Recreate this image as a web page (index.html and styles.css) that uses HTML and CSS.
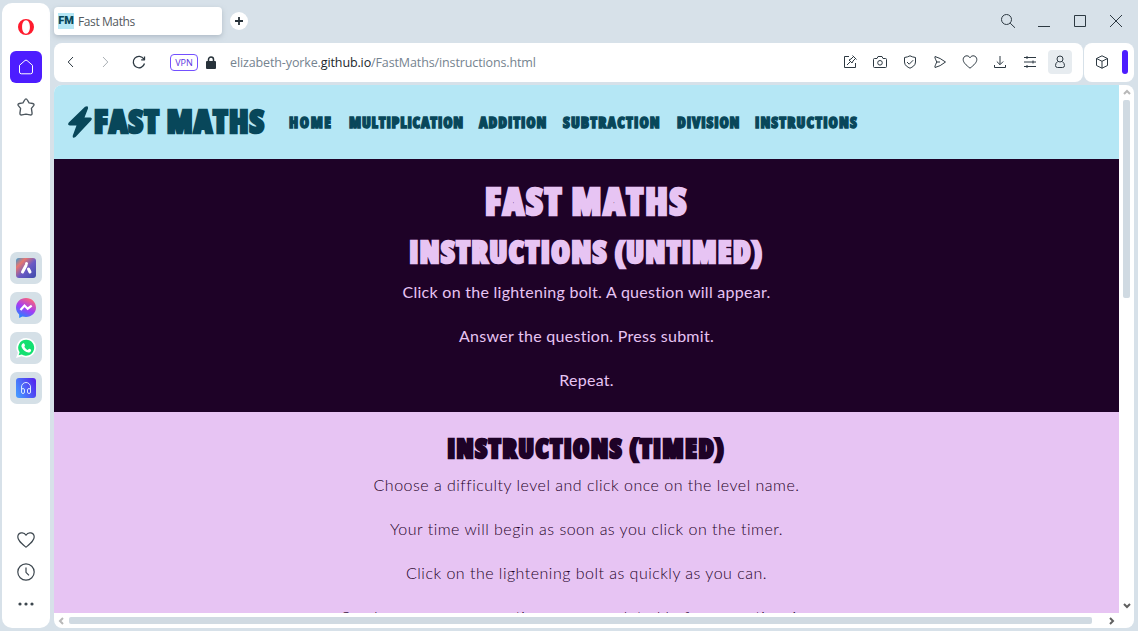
FILE: index.html
```html
<!DOCTYPE html>
<html lang="en">
<head>
<meta charset="utf-8">
<title>Fast Maths</title>
<link rel="stylesheet" href="styles.css">
</head>
<body>
<div class="window">
  <aside class="sidebar">
    <div class="side-group side-top">
      <svg class="opera" viewBox="0 0 16 16"><path fill="#ff1b2d" fill-rule="evenodd" d="M8 0a8 8 0 1 0 0 16A8 8 0 1 0 8 0M8 1.300c2.300 0 3.900 2.800 3.900 6.700S10.300 14.700 8 14.700 4.100 11.900 4.100 8 5.700 1.300 8 1.300"/></svg>
      <span class="home-button"><svg class="icon" viewBox="0 0 16 16"><path stroke="#fff" d="M1.500 6.300 7 1.500q1-.8 2 0l5.500 4.800V13q0 1.800-1.800 1.800H3.300Q1.500 14.800 1.500 13z"/></svg></span>
      <svg class="icon star" viewBox="0 0 16 16"><path d="M8 .8Q8.700.8 9.200 1.800l1.500 2.600 3.200.5q1.900.5.9 1.900l-2 2.400.6 4.300q0 1.900-1.800 1.500L8 14.300 4.400 15q-1.800.4-1.800-1.500l.6-4.300-2-2.400Q.2 5.400 2.100 4.900l3.200-.5 1.500-2.600Q7.300.8 8 .8z"/></svg>
    </div>
    <div class="side-group side-apps">
      <span class="app"><svg viewBox="0 0 20 20"><defs><linearGradient id="aria" x2="1" y2="1"><stop stop-color="#339bd0"/><stop offset=".25" stop-color="#e77770"/><stop offset=".55" stop-color="#6959c5"/><stop offset="1" stop-color="#3e4baa"/></linearGradient></defs><rect width="20" height="20" rx="3" fill="url(#aria)"/><path d="M10 7.500 6.500 14M12.500 11l1.500 3" fill="none" stroke="#fff" stroke-width="3" stroke-linecap="round"/><circle cx="10.500" cy="5.500" r="1.500" fill="#fff"/></svg></span>
      <span class="app"><svg viewBox="0 0 20 20"><defs><linearGradient id="msg" x1=".2" y1="1" x2=".7" y2="0"><stop stop-color="#178cff"/><stop offset=".5" stop-color="#a23cf5"/><stop offset="1" stop-color="#ff6575"/></linearGradient></defs><path fill="url(#msg)" d="M10 0C4.300 0 0 4.200 0 9.600c0 3 1.200 5.300 3.200 7V20l3.200-1.500c1.100.3 2.300.5 3.600.5 5.700 0 10-4 10-9.400S15.700 0 10 0"/><path d="m4.500 12 4-4.500 3.200 3.200 4-3" fill="none" stroke="#fff" stroke-width="2.200"/></svg></span>
      <span class="app"><svg viewBox="0 0 20 20"><path fill="#fff" d="M10.300 0a9.700 9.700 0 0 1 0 19.400c-1.700 0-3.300-.5-4.700-1.200L0 20l1.900-5.200A9.700 9.700 0 0 1 10.300 0"/><path fill="#14e071" d="M10.300 1.700a8 8 0 1 1-4.500 14.700l-3.200.9 1-3.100A8 8 0 0 1 10.300 1.700"/><path fill="#fff" d="M6.900 5.500c1-.5 1.500.1 2 1.600.3.900-.7 1.300-.4 1.900.8 1.400 1.800 2.300 3.100 2.900.7.200 1-1.300 1.700-1.100 1.700.7 2 .9 1.800 1.600-.5 2.100-2.500 2.500-4.600 1.600C7.900 12.900 6.200 11 5.500 8.800c-.3-1.400.2-2.600 1.400-3.300"/></svg></span>
      <span class="app"><svg viewBox="0 0 20 20"><defs><linearGradient id="player" x1="0" y1=".7" x2="1" y2=".2"><stop stop-color="#4696ff"/><stop offset="1" stop-color="#5424ee"/></linearGradient></defs><rect width="20" height="20" rx="3" fill="url(#player)"/><g fill="none" stroke="#d9e8ff"><path d="M5.500 13V9a4.500 4.500 0 0 1 9 0v4"/><rect x="5.500" y="10.500" width="3" height="5" rx="1.500"/><rect x="11.500" y="10.500" width="3" height="5" rx="1.500"/></g></svg></span>
    </div>
    <div class="side-group side-bottom">
      <svg class="icon heart" viewBox="0 0 18 16"><path d="M9 15.200C4 11 .8 8.500.8 5 .8.500 6.800-.8 9 3.200 11.200-.8 17.200.5 17.200 5c0 3.500-3.200 6-8.200 10.200z"/></svg>
      <svg class="icon heart" viewBox="0 0 18 18"><circle cx="9" cy="9" r="8.200"/><path d="M9 4.500v4.800l3 3"/></svg>
      <svg class="dots" viewBox="0 0 16 4"><circle cx="2" cy="2" r="1.600"/><circle cx="8" cy="2" r="1.600"/><circle cx="14" cy="2" r="1.600"/></svg>
    </div>
  </aside>

  <div class="main">
    <header class="tabs">
      <div class="tab"><span class="favicon">FM</span>Fast Maths</div>
      <span class="new-tab"><svg viewBox="0 0 10 10"><path d="M5 1v8M1 5h8"/></svg></span>
      <div class="controls">
        <svg class="icon" viewBox="0 0 16 16"><circle cx="6.500" cy="6.500" r="5"/><path d="m10.200 10.200 4.800 4.600"/></svg>
        <svg class="icon" viewBox="0 0 16 16"><path d="M2 13.500h12"/></svg>
        <svg class="icon" viewBox="0 0 16 16"><path d="M2.500 2.500h11v11h-11z"/></svg>
        <svg class="icon" viewBox="0 0 16 16"><path d="m2 2 12 12M14 2 2 14"/></svg>
      </div>
    </header>

    <div class="toolbar-row">
      <div class="toolbar">
        <div class="history">
          <svg class="icon" viewBox="0 0 16 16"><path d="M10 3 5.200 8l4.800 5"/></svg>
          <svg class="icon disabled" viewBox="0 0 16 16"><path d="m6 3 4.800 5L6 13"/></svg>
          <svg class="icon" viewBox="0 0 16 16"><path stroke-width="1.300" d="M13.500 9.500A5.700 5.700 0 1 1 12.800 5M13.500 2.500v3.300h-3.300"/></svg>
        </div>
        <span class="vpn">VPN</span>
        <svg class="lock" viewBox="0 0 10 13"><path fill="none" stroke="#27323a" stroke-width="1.500" d="M2.500 6V3.500a2.500 2.500 0 0 1 5 0V6"/><rect y="5" width="10" height="8" rx="1" fill="#27323a"/></svg>
        <div class="url">elizabeth-yorke.<b>github.io</b>/FastMaths/instructions.html</div>
        <div class="actions">
          <svg class="icon" viewBox="0 0 16 16"><path d="M7 2.500H2.500v11h11V9M5 11l3-3M7 6l3 3 1-2 2.500-2.500-2-2L9 5zM10.500 1.500l4 4"/></svg>
          <svg class="icon" viewBox="0 0 16 16"><path d="M2.500 4.500H5l1-2h4l1 2h2.500q1 0 1 1v7q0 1-1 1h-11q-1 0-1-1v-7q0-1 1-1z"/><circle cx="8" cy="8.800" r="2.300"/></svg>
          <svg class="icon" viewBox="0 0 16 16"><path d="M8 1.800Q10 3 13.500 3.500V8c0 3.500-3 5-5.500 6.200C5.500 13 2.500 11.500 2.500 8V3.500Q6 3 8 1.800zM5 8l2.200 2.200 4-4"/></svg>
          <svg class="icon" viewBox="0 0 16 16"><path d="M3 2.500q5 1.300 10.500 5.500Q8 12.500 3 13.500 2.300 13 4.800 8 2.300 3 3 2.500zM5 8h3"/></svg>
          <svg class="icon" viewBox="0 0 16 16"><path d="M8 14.200C4 11 1.200 8.500 1.200 5.500 1.200 1.600 6.200.4 8 3.800c1.800-3.400 6.800-2.200 6.800 1.700 0 3-2.800 5.500-6.800 8.700z"/></svg>
          <svg class="icon" viewBox="0 0 16 16"><path d="M8 2v8.500M4.800 7.500 8 10.700l3.200-3.200M2.500 11v2.500h11V11"/></svg>
          <svg class="icon" viewBox="0 0 16 16"><path d="M2 3.500h12M2 8h12M2 12.500h12M5 2v3M11 6.500v3M5 11v3"/></svg>
          <span class="profile"><svg class="icon" viewBox="0 0 16 16"><circle cx="8" cy="5" r="3"/><path d="M5.800 7.500Q3.500 9 3.500 11.500q0 2 2 2h5q2 0 2-2 0-2.500-2.300-4"/></svg></span>
        </div>
      </div>
      <div class="panel-box">
        <svg class="icon" viewBox="0 0 16 16"><path d="m8 1.800 5.500 2.700v7L8 14.200l-5.500-2.700v-7zM2.500 4.500 8 7.300l5.500-2.800M8 7.300v7"/></svg>
        <span class="handle"></span>
      </div>
    </div>

    <div class="viewport">
      <main class="page">
        <nav class="navbar">
          <a class="brand"><svg class="bolt" viewBox="0 0 24 32"><path d="M17 .8Q20.500-.8 20 2.500l-3.500 9h5.800q2.700.5.700 3L7.500 31q-3.300 2-2.700-1.500l3.700-10H1.800q-2.800-.5-1-3z"/></svg><span class="display brand-name">FAST MATHS</span></a>
          <div class="links display small-caps">
            <a class="l1">Home</a><a class="l2">Multiplication</a><a class="l3">Addition</a><a class="l4">Subtraction</a><a class="l5">Division</a><a class="l6">Instructions</a>
          </div>
        </nav>
        <section class="untimed">
          <h1 class="display">FAST MATHS</h1>
          <h2 class="display small-caps">Instructions (Untimed)</h2>
          <p>Click on the lightening bolt. A question will appear.</p>
          <p>Answer the question. Press submit.</p>
          <p>Repeat.</p>
        </section>
        <section class="timed">
          <h3 class="display small-caps">Instructions (Timed)</h3>
          <p>Choose a difficulty level and click once on the level name.</p>
          <p>Your time will begin as soon as you click on the timer.</p>
          <p>Click on the lightening bolt as quickly as you can.</p>
          <p>Send your answer, questions are completed before your time is up.</p>
        </section>
      </main>
      <div class="vscroll">
        <svg class="arrow" viewBox="0 0 8 6"><path d="m1 5 3-3 3 3"/></svg>
        <span class="vthumb"></span>
        <svg class="arrow dark" viewBox="0 0 8 6"><path d="m1 1 3 3 3-3"/></svg>
      </div>
      <div class="hscroll">
        <svg class="arrow-h" viewBox="0 0 6 8"><path d="M5 1 2 4l3 3"/></svg>
        <span class="hthumb"></span>
        <svg class="arrow-h dark" viewBox="0 0 6 8"><path d="m1 1 3 3-3 3"/></svg>
      </div>
    </div>
  </div>
</div>
</body>
</html>
```
FILE: styles.css
```css
* { box-sizing: border-box; }
body { margin: 0; font-family: "Open Sans", sans-serif; }
svg { display: block; flex: none; }
.window { width: 1138px; height: 631px; padding: 3px 4px 3px 2px; display: flex; gap: 4px; background: #d7e1e9; overflow: hidden; }
.icon { width: 16px; height: 16px; fill: none; stroke: #2d3942; stroke-width: 1; stroke-linejoin: round; }

/* Sidebar */
.sidebar { width: 48px; height: 625px; background: #fff; border-radius: 10px; display: flex; flex-direction: column; }
.side-group { display: flex; flex-direction: column; align-items: center; }
.side-top { padding-top: 16px; gap: 16px; }
.opera { width: 16px; height: 16px; }
.star { width: 18px; height: 18px; margin-top: -1px; stroke: #4c565e; stroke-width: 1.2; }
.home-button { width: 32px; height: 32px; border-radius: 6px; background: #4d1dff; display: grid; place-items: center; }
.side-apps { margin-top: 136px; gap: 8px; }
.app { width: 32px; height: 32px; border-radius: 7px; background: #d5e0e7; display: grid; place-items: center; }
.app svg { width: 20px; height: 20px; }
.side-bottom { margin-top: auto; padding: 0 1px 22px 0; gap: 14px; }
.heart { width: 18px; height: 18px; stroke: #3d474f; stroke-width: 1.2; }
.dots { width: 16px; height: 4px; fill: #3d474f; margin-top: 7px; }

/* Tab strip and toolbar */
.main { width: 1080px; display: flex; flex-direction: column; }
.tabs { height: 40px; padding-top: 4px; display: flex; align-items: flex-start; }
.tab { width: 168px; height: 28px; padding-left: 4px; display: flex; align-items: center; gap: 4px; background: #fff; border-radius: 4px; box-shadow: 0 2px 5px #8e9ba888; font-size: 12px; letter-spacing: -.4px; color: #545a60; }
.favicon { width: 16px; height: 16px; background: #b5e7f5; color: #08475a; font: 900 11px/16px Roboto, sans-serif; letter-spacing: 0; text-align: center; }
.new-tab { width: 18px; height: 18px; margin: 5px 0 0 8px; border-radius: 50%; background: #fff; display: grid; place-items: center; }
.new-tab svg { width: 10px; height: 10px; stroke: #27323a; stroke-width: 1.8; }
.controls { margin: 6px 10px 0 auto; display: flex; gap: 20px; }
.toolbar-row { display: flex; gap: 1px; height: 39px; }
.toolbar { width: 1029px; background: #fff; border-radius: 8px; display: flex; align-items: center; padding: 0 11px 1px 9px; }
.history { display: flex; gap: 18px; }
.disabled { stroke: #aab0b5; }
.vpn { width: 28px; height: 17px; margin-left: 23px; border: 1px solid #7350ff; border-radius: 4px; color: #5a35df; font-size: 9px; font-weight: 500; line-height: 15px; text-align: center; }
.lock { width: 10px; height: 13px; margin-left: 8px; }
.url { margin-left: 14px; font-size: 12.500px; letter-spacing: -.12px; color: #75838f; white-space: nowrap; }
.url b { font-weight: 400; color: #20262b; }
.actions { margin-left: auto; display: flex; align-items: center; gap: 14px; }
.profile { width: 24px; height: 24px; margin-left: -4px; border-radius: 4px; background: #e7ecf0; display: grid; place-items: center; }
.panel-box { width: 50px; background: #fff; border-radius: 8px; display: flex; align-items: center; padding: 0 0 1px 10px; gap: 12px; }
.handle { width: 6px; height: 24px; border-radius: 3px; background: #4d1dff; }

/* Web page */
.viewport { width: 1080px; height: 543px; margin-top: 3px; background: #fff; border-radius: 8px; overflow: hidden; display: grid; grid-template: 528px 15px / 1065px 15px; }
.page { overflow: hidden; font-family: Lato, sans-serif; font-size: 16px; text-align: center; }
.display { font-family: "Open Sans", sans-serif; font-weight: 800; font-stretch: 87%; white-space: nowrap; -webkit-text-stroke: 2.6px currentColor; }
.small-caps { font-variant-caps: all-small-caps; }
.navbar { height: 74px; background: #b5e7f5; color: #08475a; display: flex; align-items: center; padding-left: 14px; }
.brand { width: 221px; display: flex; align-items: center; gap: 2px; }
.bolt { width: 24px; height: 32px; fill: #08475a; }
.brand-name { font-size: 32px; line-height: 40px; letter-spacing: 1.1px; padding-bottom: 2px; }
.links { display: flex; gap: 16px; font-size: 22px; line-height: 24px; text-align: left; padding-bottom: 6px; -webkit-text-stroke-width: 1.3px; }
.l1 { width: 44px; letter-spacing: 1.6px; }
.l2 { width: 114px; letter-spacing: .8px; }
.l3 { width: 68px; letter-spacing: .9px; }
.l4 { width: 98px; letter-spacing: 1.1px; }
.l5 { width: 62px; letter-spacing: .9px; }
.l6 { width: 103px; letter-spacing: 1.1px; }
.untimed { height: 253px; padding-top: 18px; background: #1e0227; color: #e7c4f3; }
.timed { height: 300px; padding-top: 10px; background: #e7c4f3; color: #1e0227; }
h1, h2, h3, p { margin: 0; }
h1 { font-size: 37px; line-height: 48px; letter-spacing: 1.8px; }
h2 { margin: -2px 0 6px; font-size: 43px; line-height: 48px; letter-spacing: 1.6px; }
h3 { margin-bottom: 4px; font-size: 37px; line-height: 44px; letter-spacing: 1.7px; }
p { height: 44px; line-height: 30px; letter-spacing: .27px; }
.timed p { font-weight: 300; letter-spacing: .49px; }

/* Scrollbars */
.vscroll { display: flex; flex-direction: column; align-items: center; padding: 4px 0 4px; }
.vthumb { width: 7px; height: 198px; margin: 5px 0 auto; border-radius: 2px; background: #d0dae2; }
.arrow { width: 8px; height: 6px; }
.arrow, .arrow-h { fill: none; stroke: #b8b8b8; stroke-width: 2; }
.vscroll .dark, .hscroll .dark { stroke: #606060; }
.hscroll { grid-column: 1; display: flex; align-items: center; padding: 0 4px; }
.hthumb { width: 1023px; height: 7px; margin: 0 auto 0 5px; border-radius: 2px; background: #d0dae2; }
.arrow-h { width: 6px; height: 8px; }
```
